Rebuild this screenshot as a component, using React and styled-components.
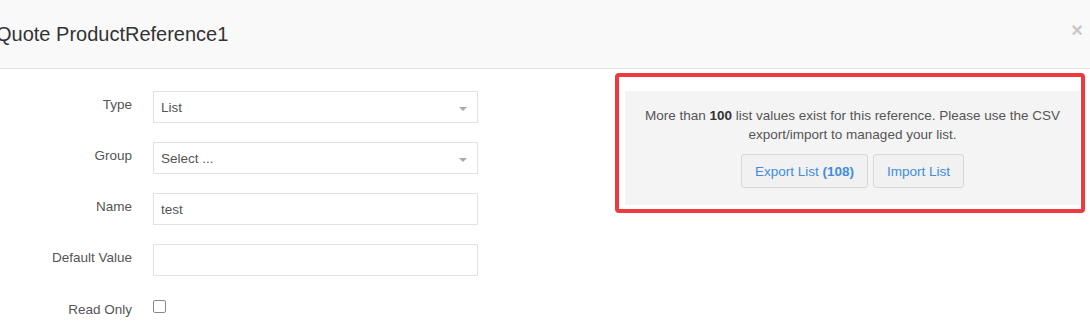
import React from 'react';
import styled, { createGlobalStyle } from 'styled-components';

const GlobalStyle = createGlobalStyle`
    body {
        margin: 0;
        background: #fff;
        font-family: 'Liberation Sans', Arial, sans-serif;
        overflow: hidden;
    }
`;

const Modal = styled.div`
    width: 1090px;
    height: 329px;
    background: #fff;
`;

const Header = styled.div`
    display: flex;
    align-items: center;
    justify-content: space-between;
    height: 69px;
    background: #f9f9f9;
    border-bottom: 1px solid #e5e5e5;
    box-sizing: border-box;
`;

const Title = styled.h4`
    margin: 0 0 0 -4px;
    font-size: 20px;
    font-weight: 400;
    color: #333;
`;

const Close = styled.span`
    margin-right: 7px;
    margin-top: -7px;
    font-size: 20px;
    font-weight: 700;
    color: #c8c8c8;
`;

const Body = styled.div`
    display: flex;
    align-items: flex-start;
`;

const Form = styled.div`
    display: flex;
    flex-direction: column;
    gap: 19px;
    padding-top: 22px;
    width: 615px;
`;

const Row = styled.div`
    display: flex;
    align-items: flex-start;
    gap: 21px;
    margin-top: ${(p) => (p.$check ? '4px' : '0')};
`;

const Label = styled.label`
    width: 132px;
    text-align: right;
    padding-top: ${(p) => (p.$check ? '3px' : '6px')};
    font-size: 13.5px;
    color: #555;
`;

const Field = styled.div`
    position: relative;
    box-sizing: border-box;
    width: 325px;
    height: 32px;
    padding: 0 7px;
    display: flex;
    align-items: center;
    border: 1px solid #e2e2e2;
    background: #fff;
    font-size: 13.5px;
    color: #555;
`;

const Caret = styled.span`
    position: absolute;
    right: 10px;
    top: 15px;
    width: 0;
    height: 0;
    border-left: 4px solid transparent;
    border-right: 4px solid transparent;
    border-top: 4px solid #aaa;
`;

const Check = styled.span`
    display: block;
    width: 11px;
    height: 11px;
    margin-top: 1px;
    border: 1px solid #8a8a8a;
    border-radius: 2px;
    background: #fff;
`;

const Highlight = styled.div`
    margin-top: 4px;
    box-sizing: border-box;
    width: 470px;
    height: 140px;
    padding: 14px 1px 4px 6px;
    border: 4px solid #ee3a3f;
    border-radius: 4px;
`;

const Notice = styled.div`
    height: 100%;
    background: #f4f4f4;
    text-align: center;
    padding-top: 15px;
    box-sizing: border-box;
    font-size: 13.5px;
    line-height: 19px;
    color: #555;
`;

const Strong = styled.b`
    color: #333;
`;

const Buttons = styled.div`
    display: flex;
    justify-content: center;
    gap: 5px;
    margin-top: 10px;
`;

const Button = styled.button`
    height: 34px;
    padding: 0 13px;
    border: 1px solid #d8d8d8;
    border-radius: 3px;
    background: #f1f1f1;
    font-family: inherit;
    font-size: 13.5px;
    color: #3f8ddd;

    b {
        font-weight: 700;
        color: inherit;
    }
`;

function Select({ value }) {
    return (
        <Field>
            {value}
            <Caret />
        </Field>
    );
}

export default function App() {
    return (
        <Modal>
            <GlobalStyle />
            <Header>
                <Title>Quote ProductReference1</Title>
                <Close>×</Close>
            </Header>
            <Body>
                <Form>
                    <Row>
                        <Label>Type</Label>
                        <Select value='List' />
                    </Row>
                    <Row>
                        <Label>Group</Label>
                        <Select value='Select ...' />
                    </Row>
                    <Row>
                        <Label>Name</Label>
                        <Field>test</Field>
                    </Row>
                    <Row>
                        <Label>Default Value</Label>
                        <Field />
                    </Row>
                    <Row $check>
                        <Label $check>Read Only</Label>
                        <Check />
                    </Row>
                </Form>
                <Highlight>
                    <Notice>
                        More than <Strong>100</Strong> list values exist for this reference. Please use the CSV
                        <br />
                        export/import to managed your list.
                        <Buttons>
                            <Button>
                                Export List <b>(108)</b>
                            </Button>
                            <Button>Import List</Button>
                        </Buttons>
                    </Notice>
                </Highlight>
            </Body>
        </Modal>
    );
}
